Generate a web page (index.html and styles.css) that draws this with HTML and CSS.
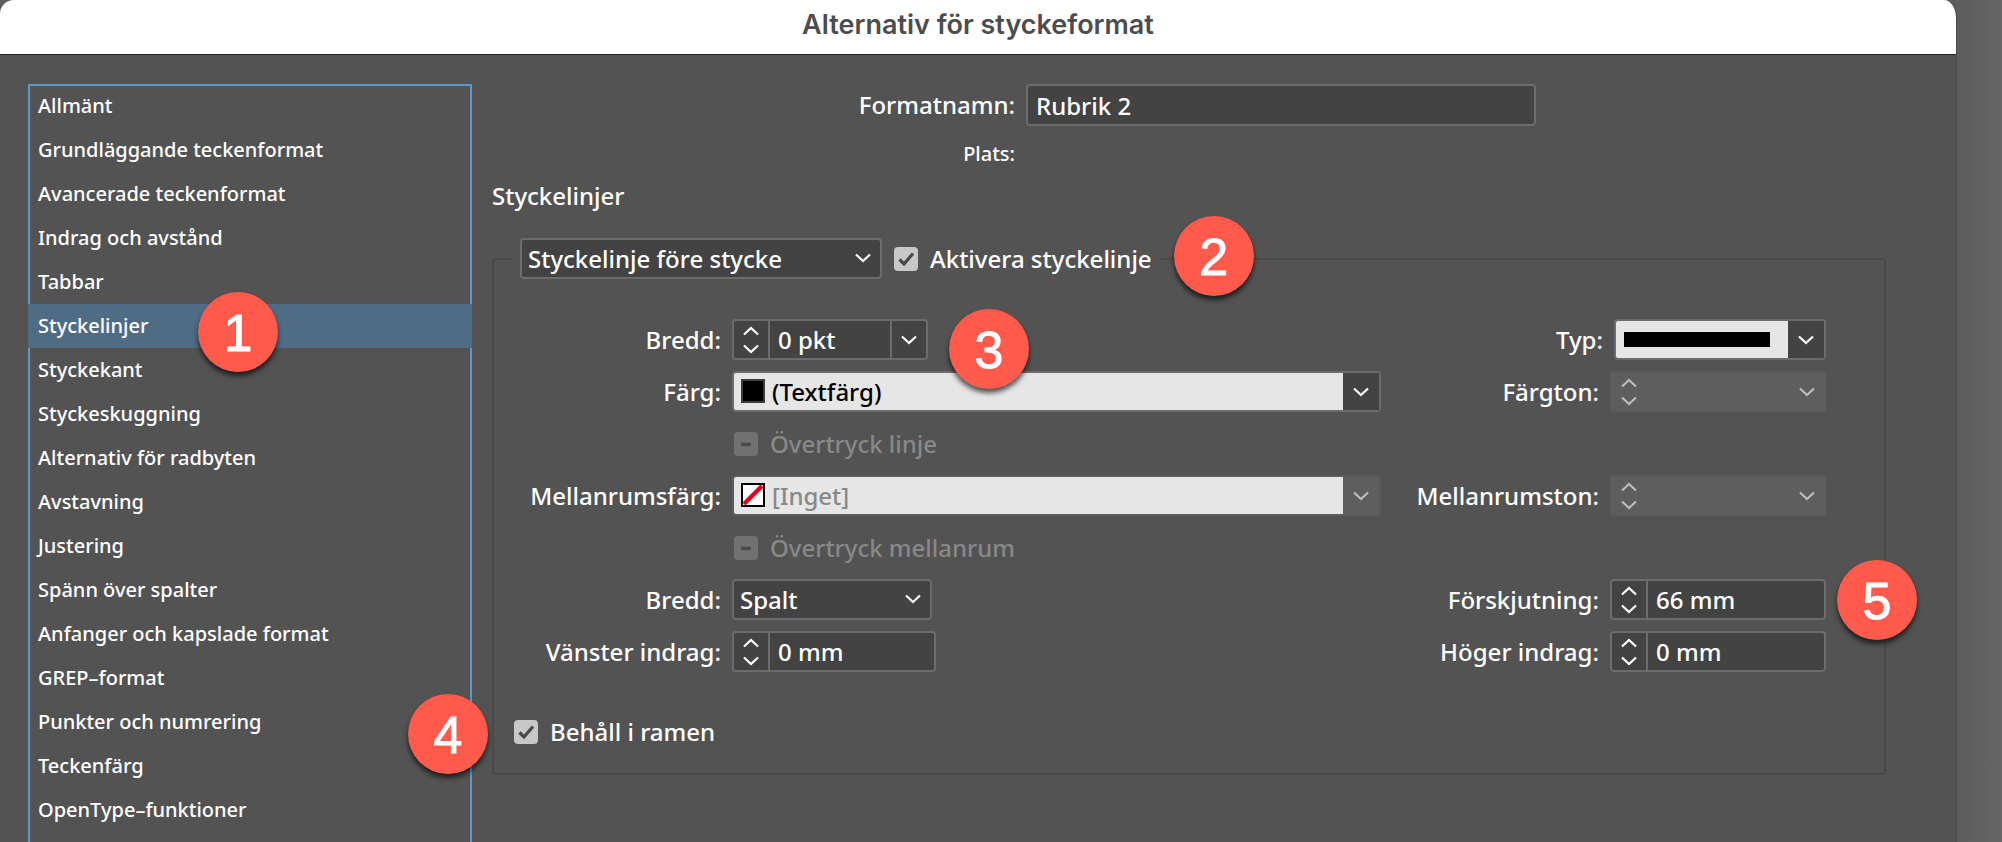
FILE: index.html
```html
<!DOCTYPE html>
<html lang="sv">
<head>
<meta charset="utf-8">
<title>Alternativ för styckeformat</title>
<link rel="stylesheet" href="styles.css">
</head>
<body>
<svg class="symbols" aria-hidden="true">
  <symbol id="down" viewBox="0 0 16 10"><path d="M1 1.5 8 8 15 1.5" fill="none" stroke="currentColor" stroke-width="2.2"/></symbol>
  <symbol id="up" viewBox="0 0 16 10"><path d="M1 8.500 8 2 15 8.500" fill="none" stroke="currentColor" stroke-width="2.2"/></symbol>
  <symbol id="tick" viewBox="0 0 24 24"><path d="M5.500 12.500 10 17 19 6.500" fill="none" stroke="#484848" stroke-width="3.2"/></symbol>
  <symbol id="dash" viewBox="0 0 24 24"><path d="M7 12.500H17" fill="none" stroke="#4a4a4a" stroke-width="3.500"/></symbol>
</svg>
<div class="window">
  <header class="titlebar"><h1 class="title">Alternativ för styckeformat</h1></header>
  <div class="body">
    <nav class="sidebar">
      <a class="item" href="#">Allmänt</a>
      <a class="item" href="#">Grundläggande teckenformat</a>
      <a class="item" href="#">Avancerade teckenformat</a>
      <a class="item" href="#">Indrag och avstånd</a>
      <a class="item" href="#">Tabbar</a>
      <a class="item selected" href="#" aria-current="page">Styckelinjer<span class="badge badge-list">1</span></a>
      <a class="item" href="#">Styckekant</a>
      <a class="item" href="#">Styckeskuggning</a>
      <a class="item" href="#">Alternativ för radbyten</a>
      <a class="item" href="#">Avstavning</a>
      <a class="item" href="#">Justering</a>
      <a class="item" href="#">Spänn över spalter</a>
      <a class="item" href="#">Anfanger och kapslade format</a>
      <a class="item" href="#">GREP–format</a>
      <a class="item" href="#">Punkter och numrering</a>
      <a class="item" href="#">Teckenfärg</a>
      <a class="item" href="#">OpenType–funktioner</a>
    </nav>
    <main class="main">
      <div class="name-row">
        <label class="label" for="name">Formatnamn:</label>
        <input class="box name" id="name" type="text" value="Rubrik 2">
      </div>
      <p class="place">Plats:</p>
      <h2 class="heading">Styckelinjer</h2>
      <fieldset class="group">
        <legend class="legend">
          <span class="select rule-select">
            <select class="box" aria-label="Styckelinje"><option>Styckelinje före stycke</option></select>
            <svg class="chevron"><use href="#down"/></svg>
          </span>
          <label class="check">
            <span class="tickbox"><input type="checkbox" checked><svg><use href="#tick"/></svg></span>
            Aktivera styckelinje
            <span class="badge badge-enable">2</span>
          </label>
        </legend>
        <div class="grid">
          <label class="label" for="weight">Bredd:</label>
          <div class="cell">
            <div class="spin weight">
              <span class="steps"><button type="button" aria-label="Öka bredd"><svg><use href="#up"/></svg></button><button type="button" aria-label="Minska bredd"><svg><use href="#down"/></svg></button></span>
              <input id="weight" type="text" value="0 pkt">
              <button class="drop" type="button" aria-label="Välj bredd"><svg><use href="#down"/></svg></button>
              <span class="badge badge-weight">3</span>
            </div>
          </div>
          <div class="pair">
            <label class="label" for="type">Typ:</label>
            <span class="combo type">
              <select id="type"><option></option></select>
              <span class="line-sample"></span>
              <span class="combo-arrow"><svg><use href="#down"/></svg></span>
            </span>
          </div>

          <label class="label" for="color">Färg:</label>
          <span class="combo">
            <select id="color"><option>(Textfärg)</option></select>
            <svg class="swatch" viewBox="0 0 24 24"><rect x="1" y="1" width="22" height="22" fill="#000" stroke="#3c3c3c" stroke-width="2"/></svg>
            <span class="combo-arrow"><svg><use href="#down"/></svg></span>
          </span>
          <div class="pair">
            <label class="label" for="tint">Färgton:</label>
            <div class="spin side disabled">
              <span class="steps"><button type="button" disabled aria-label="Öka färgton"><svg><use href="#up"/></svg></button><button type="button" disabled aria-label="Minska färgton"><svg><use href="#down"/></svg></button></span>
              <input id="tint" type="text" disabled>
              <button class="drop" type="button" disabled aria-label="Välj färgton"><svg><use href="#down"/></svg></button>
            </div>
          </div>

          <label class="check off field">
            <span class="tickbox"><input type="checkbox" disabled><svg><use href="#dash"/></svg></span>
            Övertryck linje
          </label>

          <label class="label" for="gapcolor">Mellanrumsfärg:</label>
          <span class="combo disabled">
            <select id="gapcolor" disabled><option>[Inget]</option></select>
            <svg class="swatch" viewBox="0 0 24 24"><rect x="1" y="1" width="22" height="22" fill="#fff" stroke="#000" stroke-width="2"/><path d="M3 21 21 3" stroke="#e3001b" stroke-width="4.500"/></svg>
            <span class="combo-arrow"><svg><use href="#down"/></svg></span>
          </span>
          <div class="pair">
            <label class="label" for="gaptint">Mellanrumston:</label>
            <div class="spin side disabled">
              <span class="steps"><button type="button" disabled aria-label="Öka mellanrumston"><svg><use href="#up"/></svg></button><button type="button" disabled aria-label="Minska mellanrumston"><svg><use href="#down"/></svg></button></span>
              <input id="gaptint" type="text" disabled>
              <button class="drop" type="button" disabled aria-label="Välj mellanrumston"><svg><use href="#down"/></svg></button>
            </div>
          </div>

          <label class="check off field">
            <span class="tickbox"><input type="checkbox" disabled><svg><use href="#dash"/></svg></span>
            Övertryck mellanrum
          </label>

          <label class="label" for="width">Bredd:</label>
          <div class="cell">
            <span class="select width-select">
              <select class="box" id="width"><option>Spalt</option></select>
              <svg class="chevron"><use href="#down"/></svg>
            </span>
          </div>
          <div class="pair">
            <label class="label" for="offset">Förskjutning:</label>
            <div class="spin side">
              <span class="steps"><button type="button" aria-label="Öka förskjutning"><svg><use href="#up"/></svg></button><button type="button" aria-label="Minska förskjutning"><svg><use href="#down"/></svg></button></span>
              <input id="offset" type="text" value="66 mm">
              <span class="badge badge-offset">5</span>
            </div>
          </div>

          <label class="label" for="left">Vänster indrag:</label>
          <div class="cell">
            <div class="spin indent">
              <span class="steps"><button type="button" aria-label="Öka vänster indrag"><svg><use href="#up"/></svg></button><button type="button" aria-label="Minska vänster indrag"><svg><use href="#down"/></svg></button></span>
              <input id="left" type="text" value="0 mm">
            </div>
          </div>
          <div class="pair">
            <label class="label" for="right">Höger indrag:</label>
            <div class="spin side">
              <span class="steps"><button type="button" aria-label="Öka höger indrag"><svg><use href="#up"/></svg></button><button type="button" aria-label="Minska höger indrag"><svg><use href="#down"/></svg></button></span>
              <input id="right" type="text" value="0 mm">
            </div>
          </div>
        </div>
        <label class="check keep">
          <span class="tickbox"><input type="checkbox" checked><svg><use href="#tick"/></svg></span>
          Behåll i ramen
          <span class="badge badge-keep">4</span>
        </label>
      </fieldset>
    </main>
  </div>
</div>
</body>
</html>
```

FILE: styles.css
```css
* { box-sizing: border-box; }

body {
  margin: 0;
  height: 100vh;
  overflow: hidden;
  padding-right: 45px;
  background: linear-gradient(to left, #666, #5c5c5c 46px);
  color: #fff;
  font: 500 24px/32px "Noto Sans", sans-serif;
}

input, select, button { font: inherit; color: inherit; margin: 0; }
button { padding: 0; border: 0; background: none; }
.symbols { position: absolute; width: 0; height: 0; }

.window {
  display: flex;
  flex-direction: column;
  height: 100%;
  background: #535353;
  border-right: 1px solid #484848;
  border-radius: 14px 12px 0 0 / 14px 18px 0 0;
}

.titlebar {
  flex: none;
  height: 55px;
  padding-top: 9px;
  background: #fff;
  border-bottom: 1px solid #222;
  border-radius: 14px 12px 0 0 / 14px 18px 0 0;
}

.title {
  margin: 0;
  color: #4d4d4d;
  font: 600 27px/32px Inter, sans-serif;
  text-align: center;
}

.body {
  flex: 1;
  display: flex;
  gap: 20px;
  padding: 29px 70px 0 28px;
}

.sidebar {
  flex: none;
  width: 444px;
  border: solid #5b97c9;
  border-width: 2px 2px 0;
  font-size: 20px;
}

.item {
  position: relative;
  display: block;
  height: 44px;
  padding: 0 8px;
  line-height: 44px;
  color: inherit;
  text-decoration: none;
}

.item.selected {
  margin: 0 -2px;
  padding: 0 10px;
  background: #4f6c85;
}

/* rows start on the frame's own top edge */
.item:first-child { margin-top: -2px; }

.main { flex: 1; min-width: 0; }

.name-row {
  display: grid;
  grid-template-columns: 523px minmax(0, 510px);
  gap: 11px;
  align-items: center;
}

.label { text-align: right; white-space: nowrap; }

.box {
  width: 100%;
  height: 41px;
  padding: 0 6px;
  border: 2px solid #6c6c6c;
  border-radius: 4px;
  background: #434343;
  appearance: none;
}

.name { height: 42px; padding: 0 8px; }

.place {
  width: 523px;
  margin: 14px 0 0;
  font-size: 20px;
  line-height: 28px;
  text-align: right;
}

.heading { margin: 12px 0 0; font-size: 24px; font-weight: 500; line-height: 32px; }

.group {
  min-width: 0;
  margin: 26px 0 0;
  padding: 40px 58px 22px 20px;
  border: 2px solid #494949;
  border-radius: 4px;
}

.legend {
  display: flex;
  align-items: center;
  gap: 12px;
  margin-left: -2px;
  padding: 0 8px;
}

.select { position: relative; display: block; }
.rule-select { width: 362px; }
.width-select { width: 200px; }
.chevron {
  position: absolute;
  right: 11px;
  top: 15px;
  width: 16px;
  height: 10px;
  pointer-events: none;
}

.check {
  position: relative;
  display: inline-flex;
  align-items: center;
  gap: 12px;
  white-space: nowrap;
}
.check.off { color: #888; }
.tickbox { position: relative; width: 24px; height: 24px; }
.tickbox input {
  display: block;
  width: 24px;
  height: 24px;
  border-radius: 4px;
  background: #c8c8c8;
  appearance: none;
}
.off .tickbox input { background: #717171; }
.tickbox svg { position: absolute; inset: 0; width: 24px; height: 24px; pointer-events: none; }
.keep { margin-top: 44px; }

.grid {
  display: grid;
  grid-template-columns: 207px minmax(0, 1fr) 434px;
  grid-auto-rows: 41px;
  gap: 11px;
  align-items: center;
}
.field { grid-column: 2 / 4; justify-self: start; padding-left: 2px; }
.pair { display: flex; align-items: center; justify-content: flex-end; gap: 11px; }

.spin {
  position: relative;
  display: flex;
  height: 41px;
  border: 2px solid #6c6c6c;
  border-radius: 4px;
  background: #434343;
}
.spin input {
  flex: 1;
  min-width: 0;
  padding: 0 0 0 8px;
  border: 0;
  background: none;
}
.weight { width: 196px; }
.indent { width: 204px; }
.side { width: 216px; }

.steps {
  flex: none;
  display: flex;
  flex-direction: column;
  justify-content: space-between;
  width: 36px;
  padding: 3px 0;
  border-right: 2px solid #6c6c6c;
}
.steps button { height: 13px; line-height: 0; }
.steps svg, .drop svg, .combo-arrow svg { width: 16px; height: 10px; }
.drop {
  flex: none;
  width: 36px;
  border-left: 2px solid #6c6c6c;
  line-height: 0;
}

.spin.disabled { background: #5e5e5e; border-color: #5c5c5c; color: #bcbcbc; }
.disabled .steps, .disabled .drop { border-color: transparent; }

.combo { position: relative; display: block; height: 41px; }
.combo select {
  width: 100%;
  height: 41px;
  padding: 0 40px 0 38px;
  border: 2px solid #6c6c6c;
  border-radius: 4px;
  background: #e6e6e6;
  color: #000;
  appearance: none;
}
.combo.type { width: 212px; }
.combo-arrow {
  position: absolute;
  top: 2px;
  right: 2px;
  bottom: 2px;
  width: 36px;
  display: grid;
  place-items: center;
  background: #434343;
  pointer-events: none;
}
.combo.disabled select { border-color: #5c5c5c; color: #888; opacity: 1; }
.disabled .combo-arrow { background: #5e5e5e; color: #bcbcbc; }
.swatch { position: absolute; left: 9px; top: 8px; width: 24px; height: 24px; pointer-events: none; }
.line-sample {
  position: absolute;
  left: 10px;
  top: 13px;
  width: 146px;
  height: 15px;
  background: #000;
  pointer-events: none;
}

.badge {
  position: absolute;
  z-index: 2;
  width: 80px;
  height: 80px;
  border-radius: 50%;
  background: #ff5a4c;
  box-shadow: 0 4px 5px rgba(0, 0, 0, 0.65);
  color: #fff;
  font: 400 52px/82px "Liberation Sans", Arial, sans-serif;
  -webkit-text-stroke: 1px #fff;
  text-align: center;
}
.badge-list { left: 170px; top: -12px; }
.badge-enable { left: calc(100% + 22px); top: calc(50% - 43px); }
.badge-weight { left: calc(100% + 23px); top: -12px; }
.badge-keep { left: -106px; top: calc(50% - 38px); }
.badge-offset { left: calc(100% + 13px); top: -21px; }
```
